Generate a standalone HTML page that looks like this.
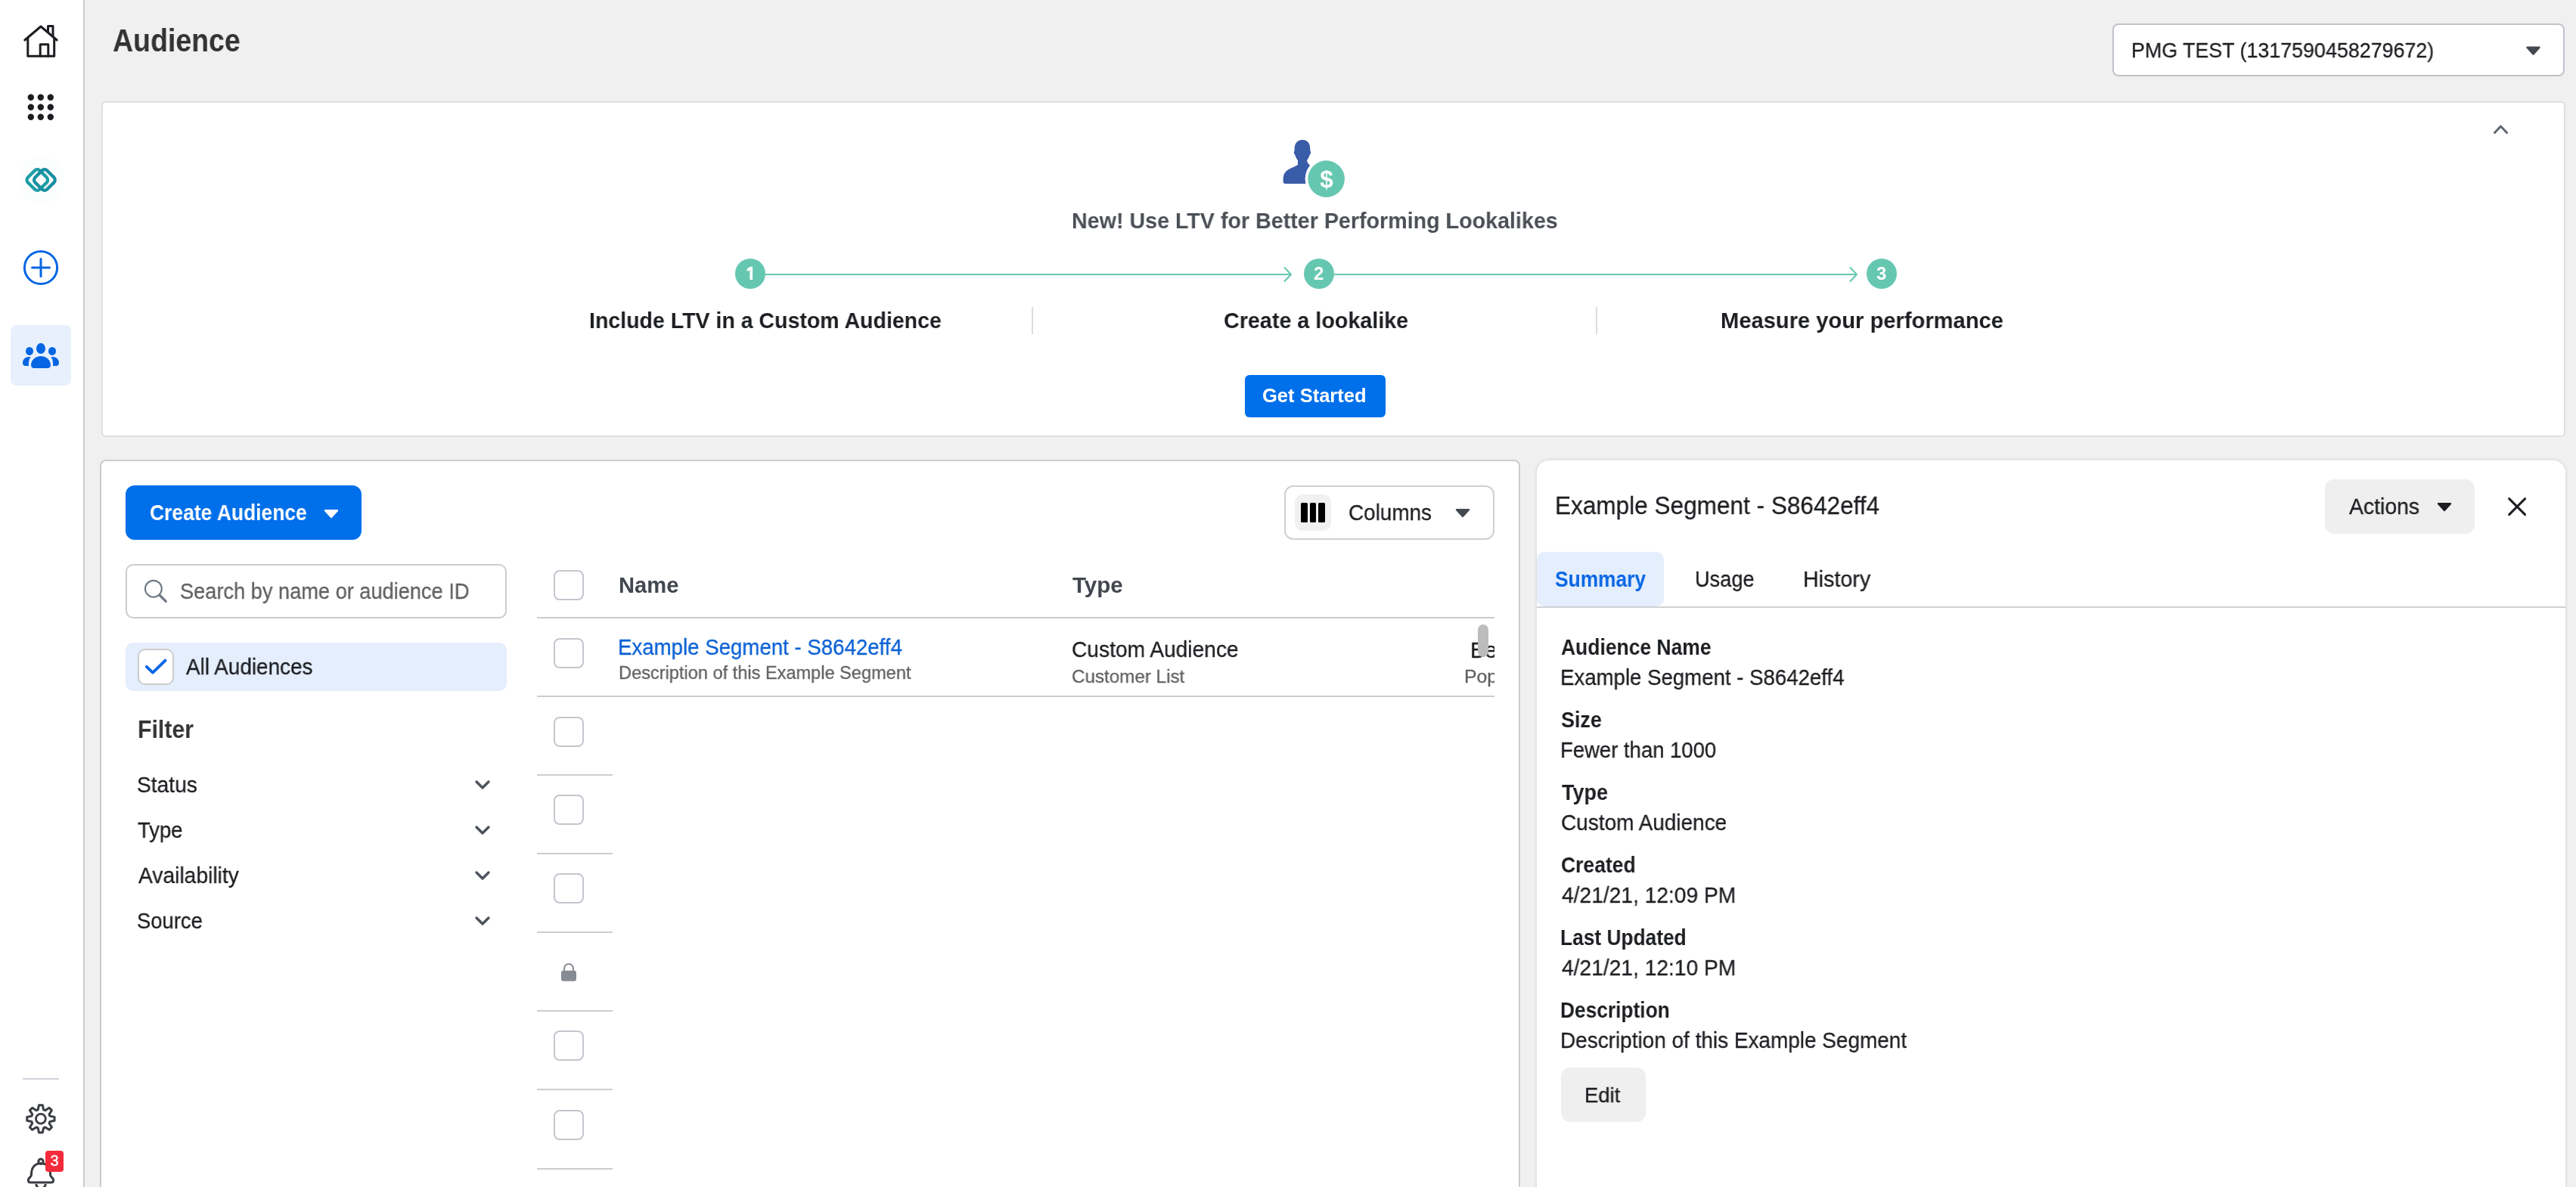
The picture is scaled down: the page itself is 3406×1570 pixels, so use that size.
<!DOCTYPE html><html><head><meta charset="utf-8"><style>
html,body{margin:0;padding:0;width:3406px;height:1570px;overflow:hidden;background:#F0F0F0;font-family:'Liberation Sans', sans-serif;}
.t{position:absolute;line-height:1;white-space:nowrap;will-change:transform;font-variant-ligatures:none;}
.r{position:absolute;box-sizing:border-box;}
svg{position:absolute;left:0;top:0;overflow:visible;}
</style></head><body>
<div class="r" style="left:0px;top:0px;width:110px;height:1570px;background:#FFFFFF;"></div>
<div class="r" style="left:110px;top:0px;width:2px;height:1570px;background:#CCCCCC;"></div>
<div class="r" style="left:14px;top:430px;width:80px;height:80px;background:#E8F0FD;border-radius:8px;"></div>
<div class="r" style="left:30px;top:1426px;width:48px;height:2px;background:#D0D4DA;"></div>
<div class="t" style="left:148.97px;top:33.00px;font-size:42.3px;font-weight:700;color:#333333;transform-origin:0 0;transform:scaleX(0.8868);">Audience</div>
<div class="r" style="left:2793px;top:31px;width:598px;height:70px;background:#fff;border:2px solid #BEC3C9;border-radius:8px;"></div>
<div class="t" style="left:2817.80px;top:54.00px;font-size:27px;font-weight:400;color:#1C1E21;transform-origin:0 0;transform:scaleX(0.9936);-webkit-text-stroke:0.3px currentColor;">PMG TEST (1317590458279672)</div>
<div class="r" style="left:134px;top:134px;width:3258px;height:444px;background:#fff;border:2px solid #DDDFE2;border-radius:6px;"></div>
<div class="t" style="left:1417.28px;top:277.00px;font-size:29.5px;font-weight:700;color:#4B4F56;transform-origin:0 0;transform:scaleX(0.9713);">New! Use LTV for Better Performing Lookalikes</div>
<div class="r" style="left:1012px;top:362px;width:695px;height:2px;background:#66C7B0;"></div>
<div class="r" style="left:1764px;top:362px;width:691px;height:2px;background:#66C7B0;"></div>
<div class="r" style="left:972px;top:342px;width:40px;height:40px;background:#66C7B0;border-radius:50%;"></div>
<div class="r" style="left:1724px;top:342px;width:40px;height:40px;background:#66C7B0;border-radius:50%;"></div>
<div class="t" style="left:1736.91px;top:350.00px;font-size:24px;font-weight:700;color:#fff;transform-origin:0 0;transform:scaleX(1.0000);">2</div>
<div class="r" style="left:2468px;top:342px;width:40px;height:40px;background:#66C7B0;border-radius:50%;"></div>
<div class="t" style="left:2481.05px;top:350.00px;font-size:24px;font-weight:700;color:#fff;transform-origin:0 0;transform:scaleX(1.0000);">3</div>
<div class="t" style="left:779.09px;top:409.00px;font-size:29.3px;font-weight:700;color:#1C1E21;transform-origin:0 0;transform:scaleX(0.9734);">Include LTV in a Custom Audience</div>
<div class="t" style="left:1618.42px;top:409.00px;font-size:29.3px;font-weight:700;color:#1C1E21;transform-origin:0 0;transform:scaleX(0.9800);">Create a lookalike</div>
<div class="t" style="left:2275.05px;top:409.00px;font-size:29.3px;font-weight:700;color:#1C1E21;transform-origin:0 0;transform:scaleX(0.9941);">Measure your performance</div>
<div class="r" style="left:1364px;top:406px;width:2px;height:36px;background:#DADDE1;"></div>
<div class="r" style="left:2110px;top:406px;width:2px;height:36px;background:#DADDE1;"></div>
<div class="r" style="left:1646px;top:496px;width:186px;height:56px;background:#006FEA;border-radius:6px;"></div>
<div class="t" style="left:1669.25px;top:511.00px;font-size:24.9px;font-weight:700;color:#fff;transform-origin:0 0;transform:scaleX(1.0256);">Get Started</div>
<div class="r" style="left:132px;top:608px;width:1878px;height:992px;background:#fff;border:2px solid #CCCCCC;border-radius:8px;"></div>
<div class="r" style="left:166px;top:642px;width:312px;height:72px;background:#006FEA;border-radius:12px;"></div>
<div class="t" style="left:197.71px;top:664.00px;font-size:28.9px;font-weight:700;color:#fff;transform-origin:0 0;transform:scaleX(0.9158);">Create Audience</div>
<div class="r" style="left:166px;top:746px;width:504px;height:72px;background:#fff;border:2px solid #CCCCCC;border-radius:10px;"></div>
<div class="t" style="left:237.76px;top:768.00px;font-size:28.9px;font-weight:400;color:#606060;transform-origin:0 0;transform:scaleX(0.9414);-webkit-text-stroke:0.3px currentColor;">Search by name or audience ID</div>
<div class="r" style="left:166px;top:850px;width:504px;height:64px;background:#E4EEFC;border-radius:10px;"></div>
<div class="r" style="left:182px;top:858px;width:48px;height:48px;background:#fff;border:2.2px solid #CCCCCC;border-radius:10px;"></div>
<div class="t" style="left:246.15px;top:868.00px;font-size:28.9px;font-weight:400;color:#1C1E21;transform-origin:0 0;transform:scaleX(0.9656);-webkit-text-stroke:0.3px currentColor;">All Audiences</div>
<div class="t" style="left:181.87px;top:948.00px;font-size:33.0px;font-weight:700;color:#333333;transform-origin:0 0;transform:scaleX(0.9175);">Filter</div>
<div class="t" style="left:181.32px;top:1024.00px;font-size:28.9px;font-weight:400;color:#1C1E21;transform-origin:0 0;transform:scaleX(0.9750);-webkit-text-stroke:0.3px currentColor;">Status</div>
<div class="t" style="left:181.98px;top:1084.00px;font-size:28.9px;font-weight:400;color:#1C1E21;transform-origin:0 0;transform:scaleX(0.9499);-webkit-text-stroke:0.3px currentColor;">Type</div>
<div class="t" style="left:182.54px;top:1144.00px;font-size:28.9px;font-weight:400;color:#1C1E21;transform-origin:0 0;transform:scaleX(0.9769);-webkit-text-stroke:0.3px currentColor;">Availability</div>
<div class="t" style="left:181.36px;top:1204.00px;font-size:28.9px;font-weight:400;color:#1C1E21;transform-origin:0 0;transform:scaleX(0.9486);-webkit-text-stroke:0.3px currentColor;">Source</div>
<div class="r" style="left:732px;top:754px;width:40px;height:40px;background:#fff;border:2px solid #C3C7CD;border-radius:8px;"></div>
<div class="t" style="left:818.05px;top:760.00px;font-size:28.9px;font-weight:700;color:#43474F;transform-origin:0 0;transform:scaleX(1.0092);">Name</div>
<div class="t" style="left:1418.37px;top:760.00px;font-size:28.9px;font-weight:700;color:#43474F;transform-origin:0 0;transform:scaleX(1.0232);">Type</div>
<div class="r" style="left:710px;top:816px;width:1266px;height:2px;background:#CCCCCC;"></div>
<div class="r" style="left:732px;top:844px;width:40px;height:40px;background:#fff;border:2px solid #C3C7CD;border-radius:8px;"></div>
<div class="t" style="left:817.43px;top:842.00px;font-size:28.9px;font-weight:400;color:#0A60D5;transform-origin:0 0;transform:scaleX(0.9565);-webkit-text-stroke:0.3px currentColor;">Example Segment - S8642eff4</div>
<div class="t" style="left:817.77px;top:878.00px;font-size:24.8px;font-weight:400;color:#606060;transform-origin:0 0;transform:scaleX(0.9505);-webkit-text-stroke:0.3px currentColor;">Description of this Example Segment</div>
<div class="t" style="left:1417.27px;top:845.00px;font-size:28.9px;font-weight:400;color:#1C1E21;transform-origin:0 0;transform:scaleX(0.9744);-webkit-text-stroke:0.3px currentColor;">Custom Audience</div>
<div class="t" style="left:1417.47px;top:883.00px;font-size:24.8px;font-weight:400;color:#606060;transform-origin:0 0;transform:scaleX(0.9756);-webkit-text-stroke:0.3px currentColor;">Customer List</div>
<div class="r" style="left:1930px;top:830px;width:46px;height:90px;overflow:hidden"><div class="t" style="left:14px;top:15.9px;font-size:28.9px;color:#1C1E21;-webkit-text-stroke:0.3px currentColor">Be</div><div class="t" style="left:5.7px;top:53.2px;font-size:24.8px;color:#606060;-webkit-text-stroke:0.3px currentColor">Pop</div></div>
<div class="r" style="left:1954px;top:826px;width:14px;height:43px;background:#BCBCBC;border-radius:7px;"></div>
<div class="r" style="left:710px;top:919.5px;width:1266px;height:2.0px;background:#CCCCCC;"></div>
<div class="r" style="left:710px;top:1024px;width:100px;height:2px;background:#CCCCCC;"></div>
<div class="r" style="left:710px;top:1128px;width:100px;height:2px;background:#CCCCCC;"></div>
<div class="r" style="left:710px;top:1232px;width:100px;height:2px;background:#CCCCCC;"></div>
<div class="r" style="left:710px;top:1336px;width:100px;height:2px;background:#CCCCCC;"></div>
<div class="r" style="left:710px;top:1440px;width:100px;height:2px;background:#CCCCCC;"></div>
<div class="r" style="left:710px;top:1545px;width:100px;height:2px;background:#CCCCCC;"></div>
<div class="r" style="left:732px;top:948px;width:40px;height:40px;background:#fff;border:2px solid #C3C7CD;border-radius:8px;"></div>
<div class="r" style="left:732px;top:1051px;width:40px;height:40px;background:#fff;border:2px solid #C3C7CD;border-radius:8px;"></div>
<div class="r" style="left:732px;top:1155px;width:40px;height:40px;background:#fff;border:2px solid #C3C7CD;border-radius:8px;"></div>
<div class="r" style="left:732px;top:1363px;width:40px;height:40px;background:#fff;border:2px solid #C3C7CD;border-radius:8px;"></div>
<div class="r" style="left:732px;top:1468px;width:40px;height:40px;background:#fff;border:2px solid #C3C7CD;border-radius:8px;"></div>
<div class="r" style="left:1698px;top:642px;width:278px;height:72px;background:#fff;border:2px solid #D0D0D0;border-radius:12px;"></div>
<div class="r" style="left:1712px;top:654px;width:48px;height:48px;background:#F0F0F0;border-radius:10px;"></div>
<div class="r" style="left:1720px;top:665px;width:9px;height:26px;background:#000;border-radius:1.5px;"></div>
<div class="r" style="left:1732px;top:665px;width:8px;height:26px;background:#000;border-radius:1.5px;"></div>
<div class="r" style="left:1743px;top:665px;width:9px;height:26px;background:#000;border-radius:1.5px;"></div>
<div class="t" style="left:1783.18px;top:664.00px;font-size:28.9px;font-weight:400;color:#1C1E21;transform-origin:0 0;transform:scaleX(0.9647);-webkit-text-stroke:0.3px currentColor;">Columns</div>
<div class="r" style="left:2032px;top:609px;width:1360px;height:1011px;background:#fff;border-radius:16px;box-shadow:0 0 5px rgba(0,0,0,0.13);"></div>
<div class="t" style="left:2055.81px;top:652.00px;font-size:33.0px;font-weight:400;color:#1C1E21;transform-origin:0 0;transform:scaleX(0.9560);-webkit-text-stroke:0.3px currentColor;">Example Segment - S8642eff4</div>
<div class="r" style="left:3074px;top:634px;width:198px;height:72px;background:#EFEFEF;border-radius:12px;"></div>
<div class="t" style="left:3105.94px;top:656.00px;font-size:28.9px;font-weight:400;color:#1C1E21;transform-origin:0 0;transform:scaleX(0.9820);-webkit-text-stroke:0.3px currentColor;">Actions</div>
<div class="r" style="left:2032px;top:730px;width:168px;height:71.5px;background:#E4EEFC;border-radius:10px;"></div>
<div class="r" style="left:2032px;top:802px;width:1360px;height:2px;background:#CFD1D5;"></div>
<div class="t" style="left:2056.04px;top:752.00px;font-size:28.9px;font-weight:700;color:#0866E4;transform-origin:0 0;transform:scaleX(0.9122);">Summary</div>
<div class="t" style="left:2240.90px;top:752.00px;font-size:28.9px;font-weight:400;color:#1C1E21;transform-origin:0 0;transform:scaleX(0.9407);-webkit-text-stroke:0.3px currentColor;">Usage</div>
<div class="t" style="left:2384.15px;top:752.00px;font-size:28.9px;font-weight:400;color:#1C1E21;transform-origin:0 0;transform:scaleX(0.9927);-webkit-text-stroke:0.3px currentColor;">History</div>
<div class="t" style="left:2064.34px;top:842.00px;font-size:28.9px;font-weight:700;color:#1C1E21;transform-origin:0 0;transform:scaleX(0.9158);">Audience Name</div>
<div class="t" style="left:2063.23px;top:882.00px;font-size:28.9px;font-weight:400;color:#1C1E21;transform-origin:0 0;transform:scaleX(0.9555);-webkit-text-stroke:0.3px currentColor;">Example Segment - S8642eff4</div>
<div class="t" style="left:2064.22px;top:938.00px;font-size:28.9px;font-weight:700;color:#1C1E21;transform-origin:0 0;transform:scaleX(0.9316);">Size</div>
<div class="t" style="left:2063.25px;top:978.00px;font-size:28.9px;font-weight:400;color:#1C1E21;transform-origin:0 0;transform:scaleX(0.9509);-webkit-text-stroke:0.3px currentColor;">Fewer than 1000</div>
<div class="t" style="left:2064.70px;top:1034.00px;font-size:28.9px;font-weight:700;color:#1C1E21;transform-origin:0 0;transform:scaleX(0.9340);">Type</div>
<div class="t" style="left:2064.08px;top:1074.00px;font-size:28.9px;font-weight:400;color:#1C1E21;transform-origin:0 0;transform:scaleX(0.9682);-webkit-text-stroke:0.3px currentColor;">Custom Audience</div>
<div class="t" style="left:2063.91px;top:1130.00px;font-size:28.9px;font-weight:700;color:#1C1E21;transform-origin:0 0;transform:scaleX(0.9170);">Created</div>
<div class="t" style="left:2064.85px;top:1170.00px;font-size:28.9px;font-weight:400;color:#1C1E21;transform-origin:0 0;transform:scaleX(0.9753);-webkit-text-stroke:0.3px currentColor;">4/21/21, 12:09 PM</div>
<div class="t" style="left:2063.24px;top:1226.00px;font-size:28.9px;font-weight:700;color:#1C1E21;transform-origin:0 0;transform:scaleX(0.9110);">Last Updated</div>
<div class="t" style="left:2064.85px;top:1266.00px;font-size:28.9px;font-weight:400;color:#1C1E21;transform-origin:0 0;transform:scaleX(0.9753);-webkit-text-stroke:0.3px currentColor;">4/21/21, 12:10 PM</div>
<div class="t" style="left:2063.24px;top:1322.00px;font-size:28.9px;font-weight:700;color:#1C1E21;transform-origin:0 0;transform:scaleX(0.9106);">Description</div>
<div class="t" style="left:2063.21px;top:1362.00px;font-size:28.9px;font-weight:400;color:#1C1E21;transform-origin:0 0;transform:scaleX(0.9671);-webkit-text-stroke:0.3px currentColor;">Description of this Example Segment</div>
<div class="r" style="left:2064px;top:1412px;width:112px;height:72px;background:#EFEFEF;border-radius:12px;"></div>
<div class="t" style="left:2095.25px;top:1435.00px;font-size:27.8px;font-weight:400;color:#1C1E21;transform-origin:0 0;transform:scaleX(0.9864);-webkit-text-stroke:0.3px currentColor;">Edit</div>
<svg width="3406" height="1570" viewBox="0 0 3406 1570"><g fill="none" stroke="#1C1E21" stroke-width="3" stroke-linejoin="round" stroke-linecap="round"><path d="M32.8 53 L54 35 L75.2 53"/><path d="M63.5 42.5 V34.4 H70 V48"/><path d="M36.8 50 V74.3 H71.7 V50"/><path d="M53.2 74.3 V58.8 H63.8 V74.3"/></g><circle cx="40.8" cy="128.8" r="4.2" fill="#1C1E21"/><circle cx="53.8" cy="128.8" r="4.2" fill="#1C1E21"/><circle cx="66.8" cy="128.8" r="4.2" fill="#1C1E21"/><circle cx="40.8" cy="141.8" r="4.2" fill="#1C1E21"/><circle cx="53.8" cy="141.8" r="4.2" fill="#1C1E21"/><circle cx="66.8" cy="141.8" r="4.2" fill="#1C1E21"/><circle cx="40.8" cy="154.8" r="4.2" fill="#1C1E21"/><circle cx="53.8" cy="154.8" r="4.2" fill="#1C1E21"/><circle cx="66.8" cy="154.8" r="4.2" fill="#1C1E21"/><circle cx="54" cy="238" r="31" fill="#FCFDFD"/><rect x="38.099999999999994" y="226.8" width="22.4" height="22.4" rx="5" transform="rotate(45 49.3 238)" fill="none" stroke="#1E9EA6" stroke-width="4.4"/><rect x="47.7" y="226.8" width="22.4" height="22.4" rx="5" transform="rotate(45 58.9 238)" fill="none" stroke="#178FA0" stroke-width="4.4"/><g fill="none" stroke="#0566E3" stroke-width="3" stroke-linecap="round"><circle cx="54" cy="354" r="21.6"/><path d="M42.5 354 H65.5 M54 342.5 V365.5"/></g><g fill="#0566E3"><ellipse cx="54" cy="460.9" rx="6" ry="7.1"/><ellipse cx="39" cy="464.4" rx="5" ry="5.5"/><ellipse cx="69" cy="464.4" rx="5" ry="5.5"/><path d="M41 483 C41 476 47 471 54 471 C61 471 67 476 67 483 C67 485 65.5 487 63 487 L45 487 C42.5 487 41 485 41 483 Z"/><path d="M40.5 472 L38 472 C33 472 30 476 30 480 C30 482.5 31.5 484 34 484 L38 484 C37.5 479 38.5 475 40.5 472 Z"/><path d="M67.5 472 L70 472 C75 472 78 476 78 480 C78 482.5 76.5 484 74 484 L70 484 C70.5 479 69.5 475 67.5 472 Z"/></g><path d="M50.22 1467.75 L51.51 1461.66 L56.29 1461.66 L57.58 1467.75 L59.82 1468.67 L65.04 1465.28 L68.42 1468.66 L65.03 1473.88 L65.95 1476.12 L72.04 1477.41 L72.04 1482.19 L65.95 1483.48 L65.03 1485.72 L68.42 1490.94 L65.04 1494.32 L59.82 1490.93 L57.58 1491.85 L56.29 1497.94 L51.51 1497.94 L50.22 1491.85 L47.98 1490.93 L42.76 1494.32 L39.38 1490.94 L42.77 1485.72 L41.85 1483.48 L35.76 1482.19 L35.76 1477.41 L41.85 1476.12 L42.77 1473.88 L39.38 1468.66 L42.76 1465.28 L47.98 1468.67 Z" fill="none" stroke="#3A3D42" stroke-width="3" stroke-linejoin="round"/><circle cx="53.9" cy="1479.8" r="6.4" fill="none" stroke="#3A3D42" stroke-width="2.8"/><g fill="none" stroke="#3A3D42" stroke-width="3" stroke-linejoin="round"><circle cx="54" cy="1536.3" r="3.2"/><path d="M41.5 1553 C41.5 1544 46.5 1538.8 54 1538.8 C61.5 1538.8 66.5 1544 66.5 1553 L66.5 1554 C66.5 1556.5 70.6 1558 70.6 1561 C70.6 1563 69.6 1564 67.6 1564 L40.4 1564 C38.4 1564 37.4 1563 37.4 1561 C37.4 1558 41.5 1556.5 41.5 1554 Z"/><path d="M47.8 1566 A6.2 6.2 0 0 0 60.2 1566"/></g><rect x="60" y="1522" width="24" height="28" rx="4" fill="#F42B3B"/><path d="M3341.5 62.6 H3357.5 L3349.5 71.6 Z" fill="#444950" stroke="#444950" stroke-width="2.4" stroke-linejoin="round"/><path d="M3298.5 175.5 L3306.5 167 L3314.5 175.5" fill="none" stroke="#606770" stroke-width="3" stroke-linecap="round" stroke-linejoin="round"/><path d="M1722 185 C1715 185 1711.6 190 1711.6 197 L1711.6 199.5 C1710.3 200.5 1710.6 203.5 1712.2 204.5 C1713 208 1714.8 210.8 1716 212 L1716 218 C1712 220.5 1704 223 1700 227 C1697 230 1696.6 234 1696.6 238 L1696.6 240.5 C1696.6 242 1697.8 243 1699.5 243 L1732 243 L1732 218.5 C1729.5 216.5 1728.2 214 1728 212 C1729.6 210.5 1731 207.5 1731.8 204.5 C1733.4 203.5 1733.6 200.5 1732.3 199.5 L1732.3 196.5 C1732.3 189.5 1728.5 185 1722 185 Z" fill="#385CA8"/><circle cx="1753.6" cy="236.6" r="28" fill="#fff"/><circle cx="1753.6" cy="236.6" r="24.3" fill="#66C7B0"/><path d="M991.4 370 V357.6 L987.8 358.9 V355.6 L992 352.8 H995.1 V370 Z" fill="#fff"/><path d="M1698.5 354 L1707 363 L1698.5 372" fill="none" stroke="#66C7B0" stroke-width="2" stroke-linecap="round" stroke-linejoin="round"/><path d="M2446.5 354 L2455 363 L2446.5 372" fill="none" stroke="#66C7B0" stroke-width="2" stroke-linecap="round" stroke-linejoin="round"/><path d="M430 675.2 H446 L438 684 Z" fill="#fff" stroke="#fff" stroke-width="2.4" stroke-linejoin="round"/><g fill="none" stroke="#6F7885" stroke-linecap="round"><circle cx="202.9" cy="778.8" r="10.9" stroke-width="2.1"/><path d="M210.8 787 L219.3 795.3" stroke-width="3.2"/></g><path d="M193.8 881.8 L202 889.6 L218.5 873.6" fill="none" stroke="#0566E3" stroke-width="3.8" stroke-linecap="round" stroke-linejoin="round"/><path d="M630 1034 L638 1042 L646 1034" fill="none" stroke="#4D535C" stroke-width="3.4" stroke-linecap="round" stroke-linejoin="round"/><path d="M630 1094 L638 1102 L646 1094" fill="none" stroke="#4D535C" stroke-width="3.4" stroke-linecap="round" stroke-linejoin="round"/><path d="M630 1154 L638 1162 L646 1154" fill="none" stroke="#4D535C" stroke-width="3.4" stroke-linecap="round" stroke-linejoin="round"/><path d="M630 1214 L638 1222 L646 1214" fill="none" stroke="#4D535C" stroke-width="3.4" stroke-linecap="round" stroke-linejoin="round"/><g fill="#868A93"><rect x="742" y="1283.7" width="20" height="14.1" rx="3"/></g><path d="M746 1284.5 V1281 A6 6 0 0 1 758 1281 V1284.5" fill="none" stroke="#868A93" stroke-width="2"/><path d="M1926 674.2 H1942 L1934 683 Z" fill="#444950" stroke="#444950" stroke-width="2.4" stroke-linejoin="round"/><path d="M3224 666.2 H3240 L3232 675 Z" fill="#1C1E21" stroke="#1C1E21" stroke-width="2.4" stroke-linejoin="round"/><path d="M3317.6 659.6 L3338.6 680.6 M3338.6 659.6 L3317.6 680.6" fill="none" stroke="#1C1E21" stroke-width="3" stroke-linecap="round"/></svg>
<div class="t" style="left:754.3px;width:2000px;text-align:center;top:221.7px;font-size:31.5px;font-weight:700;color:#fff;">$</div>
<div class="t" style="left:-927.8px;width:2000px;text-align:center;top:1525.4px;font-size:20px;font-weight:400;color:#fff;-webkit-text-stroke:0.3px currentColor;">3</div>
</body></html>
